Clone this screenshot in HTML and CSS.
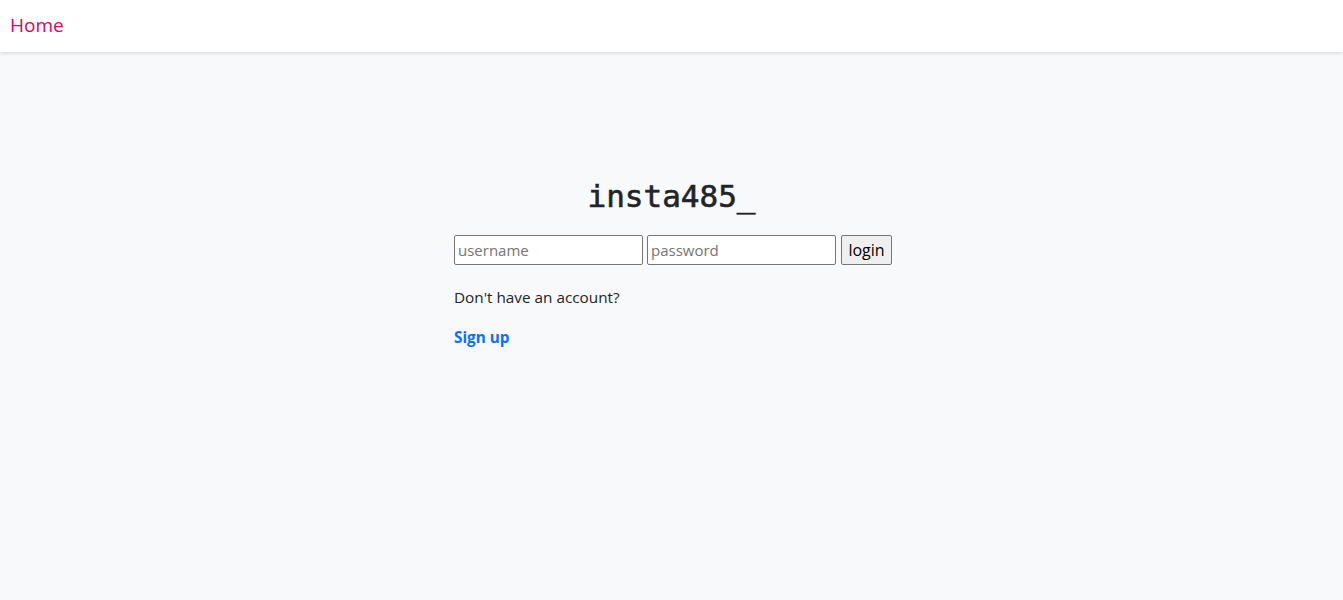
FILE: index.html
```html
<!DOCTYPE html>
<html>
<head>
<meta charset="utf-8">
<link rel="stylesheet" href="styles.css">
</head>
<body>
<nav class="navbar">
  <a class="brand" href="#">Home</a>
</nav>
<main class="main">
  <div class="panel">
    <h1 class="title">insta485_</h1>
    <form class="login-form">
      <input class="field" type="text" placeholder="username">
      <input class="field" type="password" placeholder="password">
      <button class="btn" type="button">login</button>
    </form>
    <p class="note">Don't have an account?</p>
    <p class="note"><a class="signup" href="#">Sign up</a></p>
  </div>
</main>
</body>
</html>
```
FILE: styles.css
```css
html, body {
  margin: 0;
  padding: 0;
}
body {
  background: #f8f9fa;
  font-family: "Open Sans", "Noto Sans", "Liberation Sans", sans-serif;
  font-size: 16px;
  color: #212529;
  min-height: 600px;
}
.navbar {
  height: 52px;
  background: #fff;
  box-shadow: 0 1px 4px rgba(0,0,0,0.15);
  display: flex;
  align-items: center;
  padding: 0 10px;
  box-sizing: border-box;
}
.brand {
  color: #e0005f;
  text-decoration: none;
  font-size: 19px;
  line-height: 1;
  margin-top: -2px;
}
.main {
  display: flex;
  justify-content: center;
  padding-top: 120px;
}
.panel {
  width: 435px;
}
.title {
  margin: 0 0 15px;
  text-align: center;
  font-family: "DejaVu Sans Mono", "Liberation Mono", monospace;
  font-weight: 400;
  -webkit-text-stroke: 0.6px #212529;
  font-size: 31px;
  line-height: 48px;
  color: #212529;
}
.login-form {
  display: flex;
  align-items: center;
  gap: 4px;
  margin: 0 0 20px;
}
.field {
  width: 189px;
  height: 30px;
  box-sizing: border-box;
  border: 1px solid #767676;
  border-radius: 2px;
  background: #fff;
  font-family: inherit;
  font-size: 15px;
  padding: 1px 3px;
  margin: 0;
  color: #212529;
}
.field::placeholder {
  color: #757575;
}
.btn {
  flex: 0 0 51px;
  width: 51px;
  height: 30px;
  box-sizing: border-box;
  margin-left: 1px;
  border: 1px solid #767676;
  border-radius: 2px;
  background: #efefef;
  font-family: inherit;
  font-size: 16px;
  color: #000;
  padding: 0 4px;
}
.note {
  margin: 0 0 16px;
  line-height: 24px;
  font-size: 15.3px;
}
.signup {
  color: #0d6efd;
  font-weight: 700;
  text-decoration: none;
}
```
